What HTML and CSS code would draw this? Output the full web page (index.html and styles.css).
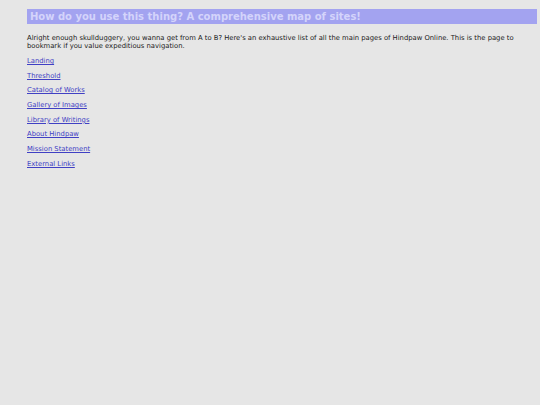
FILE: index.html
```html
<!DOCTYPE html>
<html>
<head>
<meta charset="utf-8">
<link rel="stylesheet" href="styles.css">
</head>
<body>
<div class="page">
  <h1 class="title">How do you use this thing? A comprehensive map of sites!</h1>
  <p class="intro">Alright enough skullduggery, you wanna get from A to B? Here's an exhaustive list of all the main pages of Hindpaw Online. This is the page to bookmark if you value expeditious navigation.</p>
  <ul class="links">
    <li><a href="#">Landing</a></li>
    <li><a href="#">Threshold</a></li>
    <li><a href="#">Catalog of Works</a></li>
    <li><a href="#">Gallery of Images</a></li>
    <li><a href="#">Library of Writings</a></li>
    <li><a href="#">About Hindpaw</a></li>
    <li><a href="#">Mission Statement</a></li>
    <li><a href="#">External Links</a></li>
  </ul>
</div>
</body>
</html>
```
FILE: styles.css
```css
html, body {
  margin: 0;
  padding: 0;
  background: #e6e6e6;
}
body {
  font-family: "DejaVu Sans", Verdana, sans-serif;
  font-size: 6.8px;
  color: #1a1a1a;
}
.page {
  padding: 9px 3px 0 27px;
}
.title {
  margin: 0;
  background: #a3a3f0;
  color: #d4d4fb;
  font-size: 10px;
  font-weight: bold;
  line-height: 15px;
  padding: 0 3px;
}
.intro {
  margin: 10px 0 0 0;
  line-height: 8px;
}
.links {
  list-style: none;
  margin: 7px 0 0 0;
  padding: 0;
  display: flex;
  flex-direction: column;
  gap: 6.7px;
}
.links li {
  line-height: 8px;
}
.links a {
  color: #4040c4;
}
```
